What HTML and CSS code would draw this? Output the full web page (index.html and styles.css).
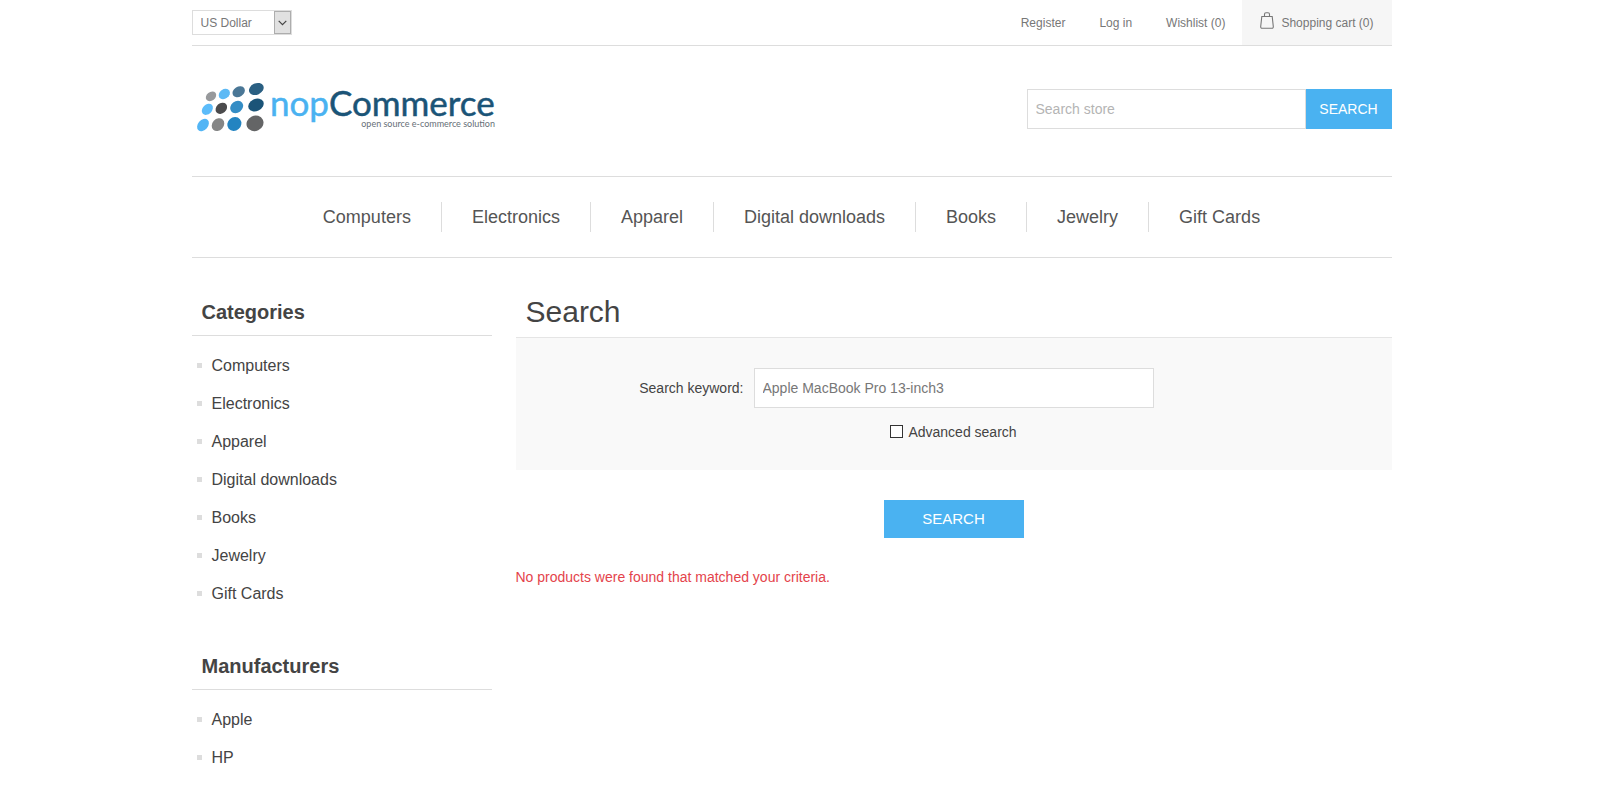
FILE: index.html
```html
<!DOCTYPE html>
<html lang="en">
<head>
<meta charset="utf-8">
<title>Search - nopCommerce</title>
<link rel="stylesheet" href="styles.css">
</head>
<body>
<div class="page">
  <header class="header">
    <div class="header-upper">
      <div class="currency">
        <select class="currency-select" aria-label="Currency">
          <option>US Dollar</option>
        </select>
        <span class="currency-arrow">
          <svg width="9" height="6" viewBox="0 0 9 6" aria-hidden="true"><path d="M0.7 0.8 4.5 4.6 8.3 0.8" fill="none" stroke="#444" stroke-width="1.2"/></svg>
        </span>
      </div>
      <nav class="header-links" aria-label="Account">
        <a href="#">Register</a>
        <a href="#">Log in</a>
        <a href="#">Wishlist (0)</a>
        <a class="cart-link" href="#">
          <svg class="cart-icon" width="14" height="17" viewBox="0 0 14 17" aria-hidden="true"><path d="M4.5 4.500V2.300Q4.500 .7 6 .7H8Q9.500 .7 9.500 2.300V4.500M1.800 4.500H12.200L13.300 14.500Q13.400 16.300 11.800 16.300H2.200Q.6 16.300 .7 14.500Z" fill="none" stroke="#777" stroke-width="1.1"/></svg>
          <span>Shopping cart (0)</span>
        </a>
      </nav>
    </div>
    <div class="header-lower">
      <a class="logo" href="#" aria-label="nopCommerce">
        <svg width="308" height="64" viewBox="0 0 308 64">
          <g transform="scale(.3333) translate(-36 -228)">
            <ellipse cx="93" cy="289" rx="17" ry="13" transform="rotate(-38 93 289)" fill="#97999c"/>
            <ellipse cx="133" cy="282" rx="18" ry="14" transform="rotate(-35 133 282)" fill="#5cb9f5"/>
            <ellipse cx="176" cy="275" rx="20" ry="15" transform="rotate(-32 176 275)" fill="#4a7796"/>
            <ellipse cx="229" cy="267" rx="23" ry="17" transform="rotate(-25 229 267)" fill="#2a5f82"/>
            <ellipse cx="82" cy="328" rx="19" ry="14" transform="rotate(-45 82 328)" fill="#5cbcfa"/>
            <ellipse cx="124" cy="325" rx="19" ry="15" transform="rotate(-42 124 325)" fill="#4b4b4d"/>
            <ellipse cx="170" cy="321" rx="21" ry="17" transform="rotate(-38 170 321)" fill="#348dc5"/>
            <ellipse cx="228" cy="315" rx="24" ry="18" transform="rotate(-25 228 315)" fill="#1b5478"/>
            <ellipse cx="69" cy="375" rx="21" ry="15" transform="rotate(-50 69 375)" fill="#52b5f5"/>
            <ellipse cx="114" cy="374" rx="21" ry="17" transform="rotate(-48 114 374)" fill="#858686"/>
            <ellipse cx="163" cy="372" rx="22" ry="20" transform="rotate(-40 163 372)" fill="#2384c1"/>
            <ellipse cx="225" cy="370" rx="26" ry="23" transform="rotate(-25 225 370)" fill="#646566"/>
          </g>
          <text class="logo-name" x="78" y="40"><tspan class="logo-nop">nop</tspan>Commerce</text>
          <text class="logo-tagline" x="303" y="51">open source e-commerce solution</text>
        </svg>
      </a>
      <form class="store-search">
        <input class="text-box store-box" type="text" placeholder="Search store" aria-label="Search store">
        <button class="button store-button" type="button">SEARCH</button>
      </form>
    </div>
  </header>

  <nav class="menu" aria-label="Main">
    <a href="#">Computers</a>
    <a href="#">Electronics</a>
    <a href="#">Apparel</a>
    <a href="#">Digital downloads</a>
    <a href="#">Books</a>
    <a href="#">Jewelry</a>
    <a href="#">Gift Cards</a>
  </nav>

  <div class="columns">
    <aside class="side">
      <section>
        <h2 class="block-title">Categories</h2>
        <ul class="block-list">
          <li><a href="#">Computers</a></li>
          <li><a href="#">Electronics</a></li>
          <li><a href="#">Apparel</a></li>
          <li><a href="#">Digital downloads</a></li>
          <li><a href="#">Books</a></li>
          <li><a href="#">Jewelry</a></li>
          <li><a href="#">Gift Cards</a></li>
        </ul>
      </section>
      <section>
        <h2 class="block-title">Manufacturers</h2>
        <ul class="block-list">
          <li><a href="#">Apple</a></li>
          <li><a href="#">HP</a></li>
        </ul>
      </section>
    </aside>
    <main class="main">
      <h1 class="page-title">Search</h1>
      <form>
        <div class="search-panel">
          <div class="keyword-row">
            <label class="keyword-label" for="keyword">Search keyword:</label>
            <input class="text-box keyword-box" id="keyword" type="text" value="Apple MacBook Pro 13-inch3">
          </div>
          <div class="advanced-row">
            <input class="tick" id="advanced" type="checkbox">
            <label for="advanced">Advanced search</label>
          </div>
        </div>
        <button class="button search-button" type="button">SEARCH</button>
      </form>
      <p class="no-result">No products were found that matched your criteria.</p>
    </main>
  </div>
</div>
</body>
</html>
```

FILE: styles.css
```css
* {
  box-sizing: border-box;
}

body {
  margin: 0;
  padding-right: 17px;
  background: #fff;
  color: #444;
  font: 14px/20px "Liberation Sans", Arial, sans-serif;
}

a {
  color: inherit;
  text-decoration: none;
}

.page {
  max-width: 1200px;
  margin: 0 auto;
}

/* Header */
.header-upper {
  display: flex;
  justify-content: space-between;
  align-items: stretch;
  min-height: 46px;
  border-bottom: 1px solid #ddd;
  color: #777;
  font-size: 12px;
}

.currency {
  display: grid;
  grid-template-columns: 82px 17px 1px;
  grid-template-rows: 1px 23px 1px;
  align-self: flex-start;
  margin-top: 10px;
}

.currency-select {
  grid-area: 1 / 1 / 4 / 4;
  appearance: none;
  border: 1px solid #ddd;
  border-radius: 0;
  padding: 0 8px;
  background: #fff;
  color: #777;
  font: inherit;
}

.currency-arrow {
  grid-area: 2 / 2;
  display: grid;
  place-items: center;
  border: 1px solid #adadad;
  background: #e1e1e1;
  pointer-events: none;
}

.header-links {
  display: flex;
  align-items: stretch;
}

.header-links a {
  display: flex;
  align-items: center;
  padding: 0 17px;
}

.header-links .cart-link {
  gap: 7px;
  padding: 0 18px;
  background: #f6f6f6;
}

.cart-icon {
  margin-bottom: 4px;
}

.header-lower {
  display: flex;
  justify-content: space-between;
  align-items: flex-start;
  padding: 30px 0 36px;
}

.logo svg {
  display: block;
}

.logo-name {
  font: 35px Lato, sans-serif;
  fill: #1b5477;
  stroke: #1b5477;
  stroke-width: 0.5px;
}

.logo-nop {
  fill: #4ab2f1;
  stroke: #4ab2f1;
}

.logo-tagline {
  font: 9px Lato, sans-serif;
  fill: #666f77;
  text-anchor: end;
}

.store-search {
  display: flex;
  margin-top: 13px;
}

.text-box {
  height: 40px;
  border: 1px solid #ddd;
  border-radius: 0;
  padding: 0 8px;
  background: #fff;
  color: #777;
  font: inherit;
}

.store-box {
  width: 279px;
}

.store-box::placeholder {
  color: #b4b4b4;
}

.button {
  border: 0;
  background: #4ab2f1;
  color: #fff;
  font: inherit;
}

.store-button {
  width: 86px;
}

/* Main menu */
.menu {
  display: flex;
  justify-content: center;
  padding: 25px 0;
  border: 1px solid #ddd;
  border-width: 1px 0;
  color: #555;
  font-size: 18px;
  line-height: 30px;
}

.menu a {
  padding: 0 30px;
}

.menu a + a {
  border-left: 1px solid #ddd;
}

/* Columns */
.columns {
  display: grid;
  grid-template-columns: 300px 1fr;
  gap: 24px;
  padding-top: 30px;
}

.block-title {
  margin: 0;
  padding: 9px 10px 8px;
  border-bottom: 1px solid #ddd;
  font-size: 20px;
  line-height: 30px;
}

.block-list {
  margin: 0 0 29px;
  padding: 11px 0 0 5px;
  list-style: none;
  font-size: 16px;
  line-height: 38px;
}

.block-list li {
  display: flex;
  align-items: center;
  gap: 10px;
}

.block-list li::before {
  content: "";
  width: 5px;
  height: 5px;
  margin-bottom: 2px;
  background: #ddd;
}

.page-title {
  margin: 0;
  padding: 4px 10px 5px;
  border-bottom: 1px solid #e5e5e5;
  font-size: 30px;
  font-weight: normal;
  line-height: 40px;
}

.search-panel {
  padding: 30px 0 28px;
  background: #f9f9f9;
}

/* Equal side columns keep the text box centred */
.keyword-row {
  display: grid;
  grid-template-columns: 1fr 400px 1fr;
  align-items: center;
}

.keyword-label {
  padding-right: 10px;
  text-align: right;
}

.advanced-row {
  display: flex;
  justify-content: center;
  align-items: center;
  gap: 5px;
  margin-top: 14px;
}

.tick {
  appearance: none;
  width: 13px;
  height: 13px;
  margin: 0 0 2px;
  border: 1px solid #333;
  background: #fff;
}

.tick:checked {
  background: #4ab2f1;
}

.search-button {
  display: block;
  width: 140px;
  height: 38px;
  margin: 30px auto 29px;
  font-size: 15px;
}

.no-result {
  margin: 0;
  color: #e4434b;
}
```
